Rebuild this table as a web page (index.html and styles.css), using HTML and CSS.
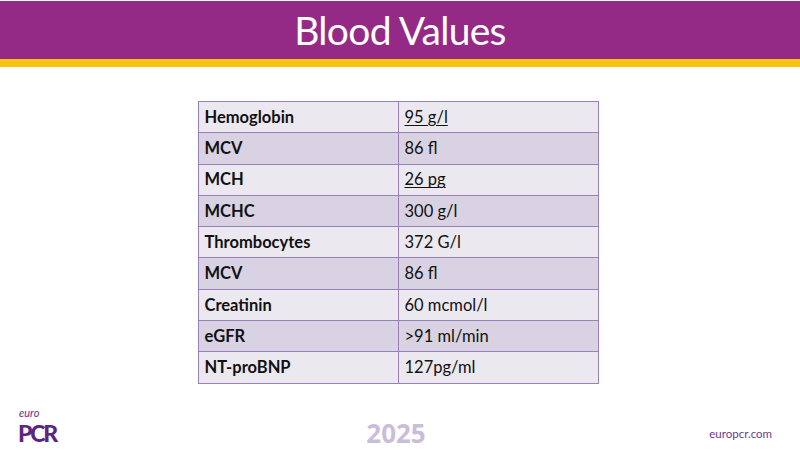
FILE: index.html
```html
<!DOCTYPE html>
<html>
<head>
<meta charset="utf-8">
<link rel="stylesheet" href="styles.css">
</head>
<body>
<div class="slide">
  <header class="header"><h1 class="title">Blood Values</h1></header>
  <div class="stripe"></div>
  <main class="content">
    <table class="values">
      <tr class="odd"><td class="name">Hemoglobin</td><td class="val"><u>95 g/l</u></td></tr>
      <tr class="even"><td class="name">MCV</td><td class="val">86 fl</td></tr>
      <tr class="odd"><td class="name">MCH</td><td class="val"><u>26 pg</u></td></tr>
      <tr class="even"><td class="name">MCHC</td><td class="val">300 g/l</td></tr>
      <tr class="odd"><td class="name">Thrombocytes</td><td class="val">372 G/l</td></tr>
      <tr class="even"><td class="name">MCV</td><td class="val">86 fl</td></tr>
      <tr class="odd"><td class="name">Creatinin</td><td class="val">60 mcmol/l</td></tr>
      <tr class="even"><td class="name">eGFR</td><td class="val">&gt;91 ml/min</td></tr>
      <tr class="odd"><td class="name">NT-proBNP</td><td class="val">127pg/ml</td></tr>
    </table>
  </main>
  <footer class="footer">
    <div class="logo"><span class="logo-euro">euro</span><span class="logo-pcr">PCR</span></div>
    <div class="year">2025</div>
    <div class="site">europcr.com</div>
  </footer>
</div>
</body>
</html>
```
FILE: styles.css
```css
html, body { margin: 0; padding: 0; background: #fff; }
.slide {
  width: 800px; height: 450px; display: flex; flex-direction: column;
  font-family: Lato, "Open Sans", sans-serif; overflow: hidden;
}
.header {
  height: 58px; margin-top: 1px; background: #952a86;
  display: flex; align-items: center; justify-content: center;
}
.title {
  margin: 0; color: #fff; font-weight: 400; font-size: 39px;
  font-family: Lato, "Open Sans", sans-serif; letter-spacing: -0.7px;
  line-height: 1; padding-top: 1px;
}
.stripe { height: 8px; background: #f6c514; }
.content { display: flex; justify-content: center; padding-top: 34px; }
.values {
  border-collapse: collapse; width: 401px; margin-right: 4px;
  font-size: 16.5px; color: #111;
}
.values td {
  border: 1px solid #9a80b8; height: 30.3px; padding: 0 6px; vertical-align: middle;
  line-height: 1;
}
.values .name { width: 187px; font-weight: 700; }
.values tr.odd td { background: #ece8f0; }
.values tr.even td { background: #d8d2e2; }
.values u { text-underline-offset: 2px; }
.footer {
  margin-top: auto; display: grid; grid-template-columns: 1fr auto 1fr;
  align-items: end; padding: 0 28px 6px 18px;
}
.logo { display: flex; flex-direction: column; justify-self: start; margin-bottom: -3px; }
.logo-euro { font-size: 11px; line-height: normal; font-style: italic; color: #6a2d86; margin-left: 1px; }
.logo-pcr { font-size: 23px; font-weight: 900; color: #5b2582; letter-spacing: -2.2px; line-height: normal; }
.year {
  font-size: 26px; font-weight: 700; color: #cbbdd9; line-height: 36px;
  font-family: "Open Sans", sans-serif; margin-left: 2px; margin-bottom: -7px;
}
.site { justify-self: end; font-size: 11.5px; color: #6a3b89; margin-bottom: 4px; }
```
